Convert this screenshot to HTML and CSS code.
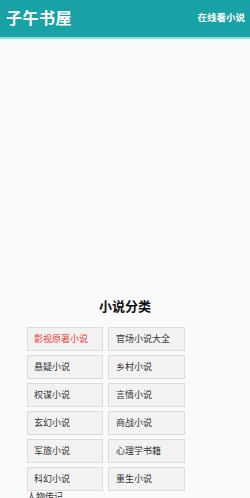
FILE: index.html
```html
<!DOCTYPE html>
<html lang="zh">
<head>
<meta charset="utf-8">
<link rel="stylesheet" href="styles.css">
</head>
<body>
<header class="topbar">
  <div class="logo">子午书屋</div>
  <div class="slogan">在线看小说</div>
</header>
<div class="blank"></div>
<h2 class="section-title">小说分类</h2>
<ul class="cats">
  <li class="cat hot">影视原著小说</li>
  <li class="cat">官场小说大全</li>
  <li class="cat">悬疑小说</li>
  <li class="cat">乡村小说</li>
  <li class="cat">权谋小说</li>
  <li class="cat">言情小说</li>
  <li class="cat">玄幻小说</li>
  <li class="cat">商战小说</li>
  <li class="cat">军旅小说</li>
  <li class="cat">心理学书籍</li>
  <li class="cat">科幻小说</li>
  <li class="cat">重生小说</li>
</ul>
<div class="extra">人物传记</div>
</body>
</html>
```
FILE: styles.css
```css
html, body {
  margin: 0;
  padding: 0;
  background: #fafafa;
  font-family: "Noto Sans CJK SC", "Noto Sans", sans-serif;
  overflow: hidden;
}
.topbar {
  height: 37px;
  background: #18a2a5;
  border-bottom: 2px solid #8ee0e0;
  display: flex;
  align-items: center;
  justify-content: space-between;
  padding: 0 5px 0 6px;
  color: #fff;
}
.logo {
  font-size: 16px;
  font-weight: bold;
  letter-spacing: 0.5px;
  margin-top: -4px;
}
.slogan {
  font-size: 9.5px;
  font-weight: bold;
  margin-top: -3px;
}
.blank {
  height: 255px;
}
.section-title {
  margin: 0;
  height: 23px;
  line-height: 23px;
  text-align: center;
  font-size: 13px;
  font-weight: bold;
  color: #111;
}
.cats {
  list-style: none;
  margin: 10px 0 0 27px;
  padding: 0;
  display: grid;
  grid-template-columns: 76px 77px;
  column-gap: 5px;
  row-gap: 4px;
}
.cat {
  box-sizing: border-box;
  height: 24px;
  line-height: 22px;
  border: 1px solid #dcdcdc;
  background: #f2f2f2;
  font-size: 9px;
  color: #333;
  padding-left: 6px;
  white-space: nowrap;
}
.cat:nth-child(even) {
  padding-left: 7px;
}
.cat.hot {
  color: #e8403a;
}
.extra {
  margin-left: 27px;
  font-size: 9px;
  line-height: 10px;
  color: #333;
  margin-top: 1px;
}
```
